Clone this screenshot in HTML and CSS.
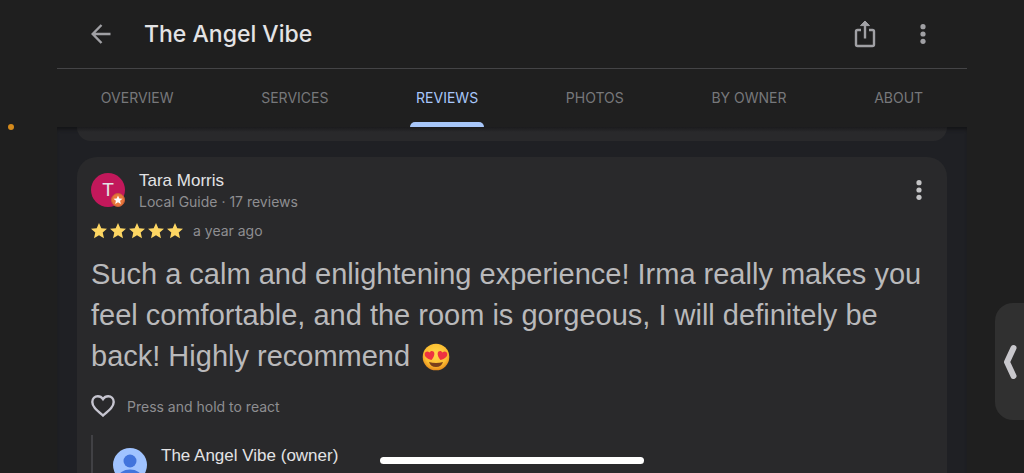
FILE: index.html
```html
<!DOCTYPE html>
<html lang="en">
  <head>
    <meta charset="UTF-8" />
    <meta name="viewport" content="width=device-width, initial-scale=1.0" />
    <title>The Angel Vibe - Reviews</title>
    <link rel="stylesheet" href="styles.css">
  </head>
  <body>
    <div class="app">
      <header class="header">
        <button type="button" class="icon-button" aria-label="Back">
          <svg class="icon-back" viewBox="0 0 20 20" aria-hidden="true">
            <path d="M19.500 10H2M10.500 1L1.700 10l8.800 9" />
          </svg>
        </button>
        <h1 class="title">The Angel Vibe</h1>
        <button type="button" class="icon-button share" aria-label="Share">
          <svg class="icon-share" viewBox="0 0 22 28" aria-hidden="true">
            <path d="M7 10H3.500Q2 10 2 11.500V24.500Q2 26 3.500 26H18.500Q20 26 20 24.500V11.500Q20 10 18.500 10H15" />
            <path d="M11 18.500V4" />
            <path class="share-head" d="M11 1L15.500 5.600H6.500Z" />
          </svg>
        </button>
        <button type="button" class="icon-button" aria-label="More options">
          <svg class="icon-more" viewBox="0 0 6 20" aria-hidden="true">
            <circle cx="3" cy="2.700" r="2.600" />
            <circle cx="3" cy="10" r="2.600" />
            <circle cx="3" cy="17.300" r="2.600" />
          </svg>
        </button>
      </header>

      <nav class="tabs" aria-label="Place sections">
        <a href="#overview" class="tab">OVERVIEW</a>
        <a href="#services" class="tab">SERVICES</a>
        <a href="#reviews" class="tab active" aria-current="page">REVIEWS</a>
        <a href="#photos" class="tab">PHOTOS</a>
        <a href="#by-owner" class="tab">BY OWNER</a>
        <a href="#about" class="tab">ABOUT</a>
      </nav>

      <main class="reviews">
        <div class="card card-previous"></div>
        <article class="card">
          <div class="reviewer">
            <div class="avatar">
              T
              <svg class="guide-badge" viewBox="0 0 14 14" aria-hidden="true">
                <circle cx="7" cy="7" r="6.500" fill="#e8763a" stroke="#c9603a" />
                <path fill="#fff" d="M7 2.500l1.300 2.900 3.200.3-2.400 2.100.7 3.200L7 9.300 4.200 11l.7-3.200-2.400-2.100 3.200-.3z" />
              </svg>
            </div>
            <div class="reviewer-info">
              <h2 class="name">Tara Morris</h2>
              <p class="meta">Local Guide · 17 reviews</p>
            </div>
            <button type="button" class="icon-button card-more" aria-label="Review options">
              <svg class="icon-more" viewBox="0 0 6 20" aria-hidden="true">
                <circle cx="3" cy="2.700" r="2.600" />
                <circle cx="3" cy="10" r="2.600" />
                <circle cx="3" cy="17.300" r="2.600" />
              </svg>
            </button>
          </div>

          <div class="rating">
            <svg class="stars" viewBox="0 0 92 16" role="img" aria-label="5 stars">
              <defs>
                <path id="star" d="M8 0l2.300 5.200 5.700.6-4.300 3.700 1.300 5.800L8 12.300l-5 3 1.300-5.800L0 5.800l5.700-.6z" />
              </defs>
              <use href="#star" />
              <use href="#star" x="19" />
              <use href="#star" x="38" />
              <use href="#star" x="57" />
              <use href="#star" x="76" />
            </svg>
            <span class="meta">a year ago</span>
          </div>

          <p class="review-text">
            Such a calm and enlightening experience! Irma really makes you feel
            comfortable, and the room is gorgeous, I will definitely be back!
            Highly recommend
            <svg class="emoji" viewBox="0 0 28 28" role="img" aria-label="Smiling face with heart eyes">
              <defs>
                <radialGradient id="face" cx="50%" cy="40%" r="60%">
                  <stop offset="0" stop-color="#ffd84a" />
                  <stop offset="0.700" stop-color="#fbbd31" />
                  <stop offset="1" stop-color="#e58a1c" />
                </radialGradient>
              </defs>
              <circle cx="14" cy="14" r="13.300" fill="url(#face)" />
              <path fill="#ee3341" d="M9.500 17C5 16 2.600 13.600 2.700 11c.1-2.500 3-3.500 4.700-1.500 1.300-2.400 4.500-2 4.900.5.300 2.300-.8 4.700-2.800 7z" />
              <path fill="#ee3341" d="M18.500 17c4.500-1 6.900-3.400 6.800-6-.1-2.500-3-3.500-4.700-1.500-1.300-2.400-4.500-2-4.900.5-.3 2.300.8 4.700 2.800 7z" />
              <path fill="#79401b" d="M7 19q7 2.200 14 0-1.500 5-7 5t-7-5z" />
            </svg>
          </p>

          <button type="button" class="react">
            <svg class="icon-heart" viewBox="0 0 24 22" aria-hidden="true">
              <path d="M12 20.500C5 14.500 1.300 11.500 1.300 7 1.300 3.700 3.800 1.300 6.800 1.300c2.100 0 4 1.100 5.200 2.900 1.200-1.800 3.100-2.900 5.200-2.900 3 0 5.500 2.400 5.500 5.700 0 4.500-3.700 7.500-10.700 13.500z" />
            </svg>
            Press and hold to react
          </button>

          <section class="reply">
            <svg class="owner-avatar" viewBox="0 0 34 34" aria-hidden="true">
              <defs>
                <clipPath id="owner-clip"><circle cx="17" cy="17" r="17" /></clipPath>
              </defs>
              <g clip-path="url(#owner-clip)">
                <rect width="34" height="34" fill="#a0c3ff" />
                <circle cx="17" cy="13" r="6.500" fill="#4274dc" />
                <ellipse cx="17" cy="30" rx="12" ry="8.500" fill="#4274dc" />
              </g>
            </svg>
            <h3 class="name">The Angel Vibe (owner)</h3>
          </section>
        </article>
      </main>
    </div>

    <span class="status-dot"></span>
    <button type="button" class="side-handle" aria-label="Open side panel">
      <svg class="icon-chevron" viewBox="0 0 14 36" aria-hidden="true">
        <path d="M10.500 4L4 18l6.500 14" />
      </svg>
    </button>
    <div class="home-indicator"></div>
  </body>
</html>
```
FILE: styles.css
```css
:root {
  --background: #1f1f1f;
  --feed-background: #1f2024;
  --card-background: #29292b;
  --divider: #444446;
  --text-color: #e3e3e5;
  --review-color: #b9b9bb;
  --muted: #8e8e91;
  --tab-color: #77787b;
  --accent: #a8c7fa;
  --small-font: Inter, "Liberation Sans", sans-serif;
}

* {
  box-sizing: border-box;
}

body {
  margin: 0;
  background: var(--background);
  color: var(--text-color);
  font-family: "Liberation Sans", Arial, sans-serif;
  overflow: hidden;
}

h1,
h2,
h3,
p {
  margin: 0;
}

button {
  border: 0;
  padding: 0;
  background: none;
  color: inherit;
  font: inherit;
  cursor: pointer;
}

svg {
  display: block;
  flex: none;
}

.app {
  display: flex;
  flex-direction: column;
  height: 100vh;
  margin: 0 57px;
}

.header {
  display: flex;
  flex: none;
  align-items: center;
  height: 69px;
  padding: 0 28px;
  border-bottom: 1px solid var(--divider);
}

.icon-button {
  display: flex;
  align-items: center;
  justify-content: center;
  width: 32px;
  height: 32px;
  color: #a0a0a4;
}

.title {
  flex: 1;
  margin-left: 27px;
  font-family: Inter, "Liberation Sans", sans-serif;
  font-size: 23px;
  font-weight: 500;
}

.share {
  margin-right: 26px;
}

.icon-back {
  width: 20px;
  height: 20px;
}

.icon-back path,
.icon-share path {
  fill: none;
  stroke: currentColor;
  stroke-width: 2.400;
}

.icon-share {
  width: 22px;
  height: 28px;
}

.icon-share .share-head {
  fill: currentColor;
  stroke-width: 1;
}

.icon-more {
  width: 6px;
  height: 20px;
  fill: currentColor;
}

.tabs {
  display: flex;
  flex: none;
  justify-content: space-around;
  height: 58px;
}

.tab {
  display: flex;
  align-items: center;
  position: relative;
  padding-bottom: 2px;
  color: var(--tab-color);
  font-family: var(--small-font);
  font-size: 14px;
  text-decoration: none;
}

.tab.active {
  color: var(--accent);
}

.tab.active::after {
  content: "";
  position: absolute;
  left: -6px;
  right: -6px;
  bottom: 0;
  height: 5px;
  border-radius: 5px 5px 0 0;
  background: var(--accent);
}

.reviews {
  flex: 1;
  min-height: 0;
  overflow: hidden;
  padding: 0 20px;
  background: var(--feed-background);
  box-shadow: inset 0 4px 4px -2px #121214;
}

.card {
  padding: 14px;
  border-radius: 20px;
  background: var(--card-background);
}

.card-previous {
  height: 14px;
  margin-bottom: 16px;
  padding: 0;
  border-radius: 0 0 20px 20px;
  background: linear-gradient(#1b1b1d, var(--card-background) 5px);
}

.reviewer {
  display: flex;
  align-items: flex-start;
}

.avatar {
  display: flex;
  align-items: center;
  justify-content: center;
  position: relative;
  width: 34px;
  height: 34px;
  margin-top: 2px;
  border-radius: 50%;
  background: #c2185b;
  font-size: 19px;
}

.guide-badge {
  position: absolute;
  right: 0;
  bottom: 0;
  width: 14px;
  height: 14px;
}

.reviewer-info {
  flex: 1;
  margin-left: 14px;
}

.name {
  font-size: 17px;
  font-weight: 400;
  line-height: 20px;
}

.meta {
  color: var(--muted);
  font-family: var(--small-font);
  font-size: 14px;
  line-height: 22px;
}

.card-more {
  height: 38px;
  margin-right: -2px;
  color: #c4c4c6;
}

.rating {
  display: flex;
  align-items: center;
  gap: 10px;
  margin-top: 7px;
}

.stars {
  width: 92px;
  height: 16px;
  fill: #fdd663;
}

.review-text {
  margin-top: 12px;
  color: var(--review-color);
  font-size: 29px;
  line-height: 41px;
}

.emoji {
  display: inline-block;
  width: 28px;
  height: 28px;
  margin-left: 4px;
  vertical-align: -5px;
}

.react {
  display: flex;
  align-items: center;
  gap: 12px;
  height: 24px;
  margin-top: 17px;
  color: var(--muted);
  font-family: var(--small-font);
  font-size: 14px;
}

.icon-heart {
  width: 24px;
  height: 22px;
  fill: none;
  stroke: #c6c5d0;
  stroke-width: 2.400;
}

.reply {
  display: flex;
  align-items: flex-start;
  gap: 14px;
  margin-top: 17px;
  padding: 11px 0 24px 20px;
  border-left: 2px solid #414145;
}

.owner-avatar {
  width: 34px;
  height: 34px;
  margin-top: 2px;
}

.status-dot {
  position: fixed;
  top: 124px;
  left: 8px;
  width: 6px;
  height: 6px;
  border-radius: 50%;
  background: #d48a1c;
}

.side-handle {
  display: flex;
  align-items: center;
  justify-content: center;
  position: fixed;
  top: 303px;
  right: 0;
  width: 29px;
  height: 117px;
  border-radius: 18px 0 0 18px;
  background: #303030;
}

.icon-chevron {
  width: 14px;
  height: 36px;
  fill: none;
  stroke: #c8c7cc;
  stroke-width: 6;
  stroke-linecap: round;
  stroke-linejoin: round;
}

.home-indicator {
  position: fixed;
  bottom: 9px;
  left: 50%;
  width: 264px;
  height: 7px;
  border-radius: 4px;
  background: #fff;
  transform: translateX(-50%);
}
```
